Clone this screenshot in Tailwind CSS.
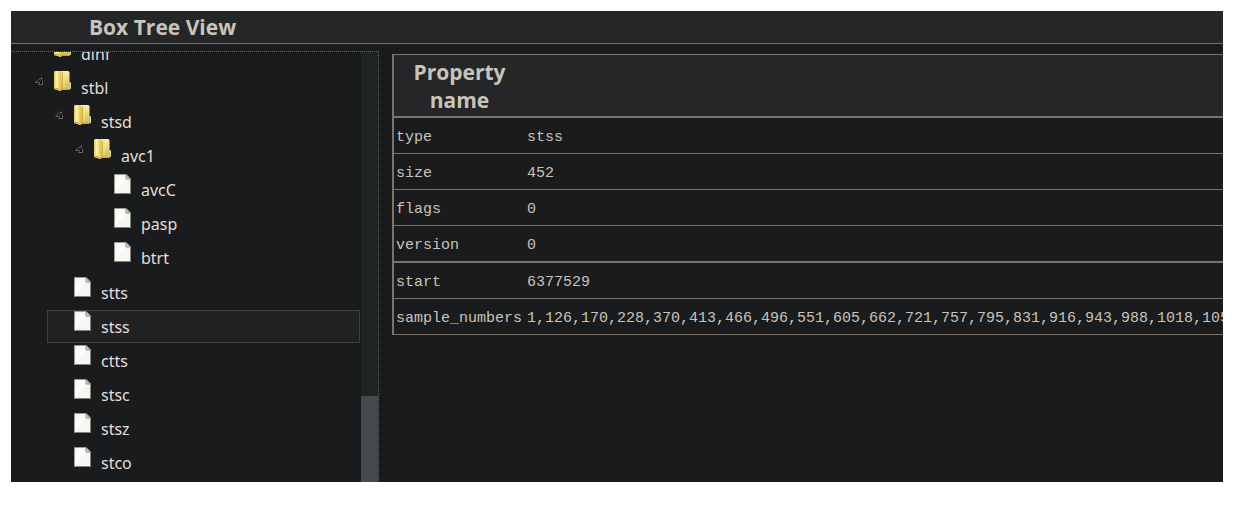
<!DOCTYPE html>
<html lang="en">
<head>
    <meta charset="UTF-8">
    <meta name="viewport" content="width=device-width, initial-scale=1.0">
    <title>Box Tree View</title>
    <script src="https://cdn.jsdelivr.net/npm/@tailwindcss/browser@4"></script>
</head>
<body class="bg-white">
    <!-- shared icons -->
    <svg class="absolute h-0 w-0" aria-hidden="true">
        <defs>
            <linearGradient id="gold" x1="0" x2="1" y1="0" y2="0">
                <stop offset="0" stop-color="#e3c659"/>
                <stop offset=".35" stop-color="#fbf3ae"/>
                <stop offset="1" stop-color="#d9b945"/>
            </linearGradient>
            <linearGradient id="goldDown" x1="0" x2="0" y1="0" y2="1">
                <stop offset="0" stop-color="#fbf1a4"/>
                <stop offset="1" stop-color="#d6b440"/>
            </linearGradient>
            <linearGradient id="paper" x1="0" x2="1" y1="0" y2="1">
                <stop offset="0" stop-color="#f3f4ee"/>
                <stop offset=".45" stop-color="#ffffff"/>
                <stop offset=".5" stop-color="#f5f7f1"/>
                <stop offset="1" stop-color="#f5f7f1"/>
            </linearGradient>
        </defs>
        <symbol id="folder" viewBox="0 0 17 20">
            <path d="M1 1.5Q1 0 2.500 0H14Q15.500 0 15.500 1.500V11L17 12V17.500L15 19H8L6 20L1 18Z" fill="url(#goldDown)"/>
            <path d="M0 1Q0 0 1.500 0H5.500Q7.500 .5 7.500 2.500V19L5.500 20L3.500 18.500H1Q0 18.500 0 17.500Z" fill="url(#gold)"/>
            <path d="M8.500 1.500V18" stroke="#d3b044" stroke-width="1"/>
            <path d="M10 1.500V16" stroke="#f6e88f" stroke-width="1"/>
            <path d="M.5 17.500H4L6 19.500L8 18.500H14.500L16 17" fill="none" stroke="#c7a238" stroke-width="1"/>
            <path d="M14 13H16V17H14Z" fill="#8fd0c4"/>
            <path d="M16.500 11.500V17.500" stroke="#e9d98c" stroke-width="1"/>
        </symbol>
        <symbol id="file" viewBox="0 0 17 20">
            <path d="M.5 .5H12L16.500 5V19.500H.5Z" fill="url(#paper)" stroke="#9a9c98"/>
            <path d="M1 19.500H16.500V6" fill="none" stroke="#7f827e"/>
            <path d="M12 .5V5H16.500Z" fill="#d4d6d2" stroke="#8b8d8a"/>
        </symbol>
        <symbol id="arrow" viewBox="0 0 8 9">
            <path d="M2 5L7 .5V8H3Z" fill="#050505"/>
            <path d="M.5 5.500L6.500 .5M1 5.500H3.500M6.500 1V3M5.500 3.500L3.500 7.500H7.500V4" fill="none" stroke="#66696a"/>
        </symbol>
    </svg>

    <main class="flex h-screen flex-col pt-[11px] pr-8 pb-[45px] pl-[11px]">
        <div class="flex min-h-0 flex-1 flex-col overflow-hidden bg-[#1a1b1c] text-[#c9c3ba]">
            <header class="border-b border-[#7d7266] bg-[#242627] pl-[78px]">
                <h1 class="font-['Open_Sans','Noto_Sans',sans-serif] text-[21px] leading-8 font-bold">Box Tree View</h1>
            </header>

            <div class="flex min-h-0 flex-1 pt-[7px]">
                <!-- tree -->
                <nav class="flex w-[368px] shrink-0 border-t border-r border-dotted border-[#66696a]" aria-label="Boxes">
                    <div class="flex flex-1 flex-col justify-end overflow-hidden pr-px pb-0.5 pl-4 font-['Noto_Sans',sans-serif] text-base leading-[34px] text-[#e2dfda]">
                        <ul>
                            <li>
                                <a href="#dinf" class="flex gap-2.5"><svg class="mt-1.5 mr-px ml-2 h-[9px] w-2"><use href="#arrow"/></svg><svg class="h-5 w-[17px]"><use href="#folder"/></svg>dinf</a>
                            </li>
                            <li>
                                <a href="#stbl" class="flex gap-2.5"><svg class="mt-1.5 mr-px ml-2 h-[9px] w-2"><use href="#arrow"/></svg><svg class="h-5 w-[17px]"><use href="#folder"/></svg>stbl</a>
                                <ul class="pl-5">
                                    <li>
                                        <a href="#stsd" class="flex gap-2.5"><svg class="mt-1.5 mr-px ml-2 h-[9px] w-2"><use href="#arrow"/></svg><svg class="h-5 w-[17px]"><use href="#folder"/></svg>stsd</a>
                                        <ul class="pl-5">
                                            <li>
                                                <a href="#avc1" class="flex gap-2.5"><svg class="mt-1.5 mr-px ml-2 h-[9px] w-2"><use href="#arrow"/></svg><svg class="h-5 w-[17px]"><use href="#folder"/></svg>avc1</a>
                                                <ul class="pb-px pl-5">
                                                    <li><a href="#avcC" class="flex gap-2.5 pl-[27px]"><svg class="mt-px h-5 w-[17px]"><use href="#file"/></svg>avcC</a></li>
                                                    <li><a href="#pasp" class="flex gap-2.5 pl-[27px]"><svg class="mt-px h-5 w-[17px]"><use href="#file"/></svg>pasp</a></li>
                                                    <li><a href="#btrt" class="flex gap-2.5 pl-[27px]"><svg class="mt-px h-5 w-[17px]"><use href="#file"/></svg>btrt</a></li>
                                                </ul>
                                            </li>
                                        </ul>
                                    </li>
                                    <li><a href="#stts" class="flex gap-2.5 pl-[27px]"><svg class="mt-px h-5 w-[17px]"><use href="#file"/></svg>stts</a></li>
                                    <li class="pb-px"><a href="#stss" class="flex h-[33px] gap-2.5 border border-[#3d4143] bg-[#1f2122] pl-[26px] leading-8" aria-current="true"><svg class="h-5 w-[17px]"><use href="#file"/></svg>stss</a></li>
                                    <li><a href="#ctts" class="flex gap-2.5 pl-[27px]"><svg class="mt-px h-5 w-[17px]"><use href="#file"/></svg>ctts</a></li>
                                    <li><a href="#stsc" class="flex gap-2.5 pl-[27px]"><svg class="mt-px h-5 w-[17px]"><use href="#file"/></svg>stsc</a></li>
                                    <li><a href="#stsz" class="flex gap-2.5 pl-[27px]"><svg class="mt-px h-5 w-[17px]"><use href="#file"/></svg>stsz</a></li>
                                    <li><a href="#stco" class="flex gap-2.5 pl-[27px]"><svg class="mt-px h-5 w-[17px]"><use href="#file"/></svg>stco</a></li>
                                </ul>
                            </li>
                        </ul>
                    </div>
                    <div class="flex w-[17px] flex-col justify-end bg-[#202424]">
                        <div class="h-1/5 bg-[#454a4c]"></div>
                    </div>
                </nav>

                <!-- properties of the selected box -->
                <div class="min-w-0 flex-1 overflow-hidden pt-[3px] pl-[13px]">
                    <table class="w-full border-separate border-spacing-0 border-t border-l-2 border-[#7d7266] text-left font-['Liberation_Mono',monospace] text-[15px] leading-[30px] whitespace-nowrap">
                        <thead>
                            <tr class="bg-[#242627] text-center font-['Open_Sans','Noto_Sans',sans-serif] text-[21px] leading-7">
                                <th class="w-[131px] min-w-[131px] border-b-2 border-[#7d7266] px-2 pt-[3px] pb-0.5 font-bold whitespace-normal">Property name</th>
                                <th class="border-b-2 border-[#7d7266]"></th>
                            </tr>
                        </thead>
                        <tbody>
                            <tr>
                                <td class="border-b border-[#7d7266] px-0.5 pt-[5px]">type</td>
                                <td class="border-b border-[#7d7266] px-0.5 pt-[5px]">stss</td>
                            </tr>
                            <tr>
                                <td class="border-b border-[#7d7266] px-0.5 pt-[5px]">size</td>
                                <td class="border-b border-[#7d7266] px-0.5 pt-[5px]">452</td>
                            </tr>
                            <tr>
                                <td class="border-b border-[#7d7266] px-0.5 pt-[5px]">flags</td>
                                <td class="border-b border-[#7d7266] px-0.5 pt-[5px]">0</td>
                            </tr>
                            <tr>
                                <td class="border-b-2 border-[#7d7266] px-0.5 pt-[5px]">version</td>
                                <td class="border-b-2 border-[#7d7266] px-0.5 pt-[5px]">0</td>
                            </tr>
                            <tr>
                                <td class="border-b border-[#7d7266] px-0.5 pt-[5px]">start</td>
                                <td class="border-b border-[#7d7266] px-0.5 pt-[5px]">6377529</td>
                            </tr>
                            <tr>
                                <td class="border-b border-[#7d7266] px-0.5 pt-[5px]">sample_numbers</td>
                                <td class="border-b border-[#7d7266] px-0.5 pt-[5px]">1,126,170,228,370,413,466,496,551,605,662,721,757,795,831,916,943,988,1018,105</td>
                            </tr>
                        </tbody>
                    </table>
                </div>
            </div>
        </div>
    </main>
</body>
</html>
